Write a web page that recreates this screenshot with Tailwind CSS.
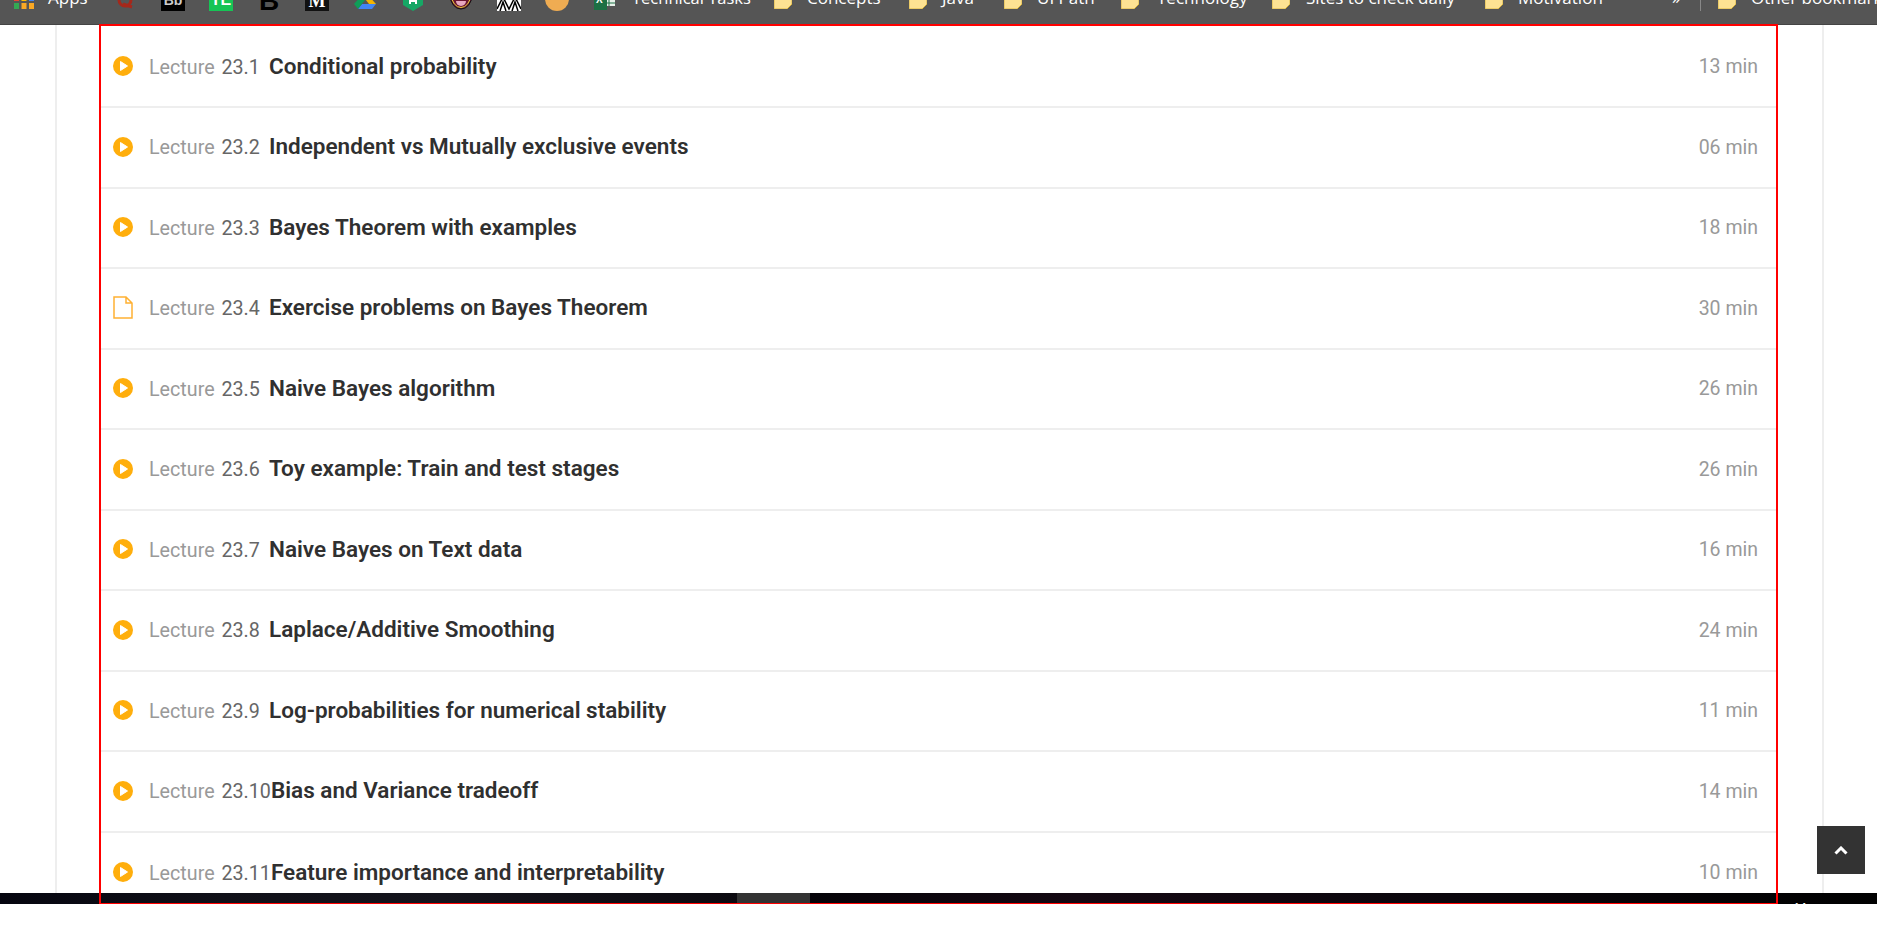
<!DOCTYPE html>
<html lang="en">
<head>
    <meta charset="UTF-8">
    <title>Lectures</title>
    <script src="https://cdn.jsdelivr.net/npm/@tailwindcss/browser@4"></script>
</head>
<body class="relative h-[929px] overflow-hidden bg-white font-['Roboto',sans-serif]">
    <!-- bookmarks bar, cut off at the top of the capture -->
    <div class="h-[25px] overflow-hidden bg-[#555555] border-b border-[#444444]">
        <div class="flex items-center h-4 -mt-[5px] text-white text-[17px] whitespace-nowrap font-['Open_Sans',sans-serif]">
            <svg class="ml-[14px] w-5 h-4 shrink-0" viewBox="0 0 20 16"><rect x="0" y="0" width="5" height="6" fill="#ea4335"/><rect x="7.5" y="0" width="5" height="6" fill="#fbbc05"/><rect x="15" y="0" width="5" height="6" fill="#4285f4"/><rect x="0" y="8" width="5" height="6" fill="#34a853"/><rect x="7.5" y="8" width="5" height="6" fill="#f9a825"/><rect x="15" y="8" width="5" height="6" fill="#f9a825"/></svg>
            <span class="ml-[14px] w-[40px] shrink-0 -mt-[10px]">Apps</span>
            <svg class="ml-[28px] w-[18px] h-4 shrink-0" viewBox="0 0 18 16"><path d="M3 5a6 6 0 1 0 12 0a6 6 0 1 0-12 0M7 9l9 3" fill="none" stroke="#a5281b" stroke-width="3"/></svg>
            <span class="ml-[27px] w-6 h-4 bg-black shrink-0 overflow-hidden text-center text-[14px] leading-[10px] font-bold text-[#cccccc] font-['Liberation_Sans',sans-serif]">Bb</span>
            <span class="ml-6 w-6 h-4 bg-[#16c455] shrink-0 overflow-hidden text-center text-[16px] leading-[10px] font-bold text-white font-['Liberation_Sans',sans-serif]">TE</span>
            <span class="ml-[26px] w-[21px] h-4 -mt-1 shrink-0 text-[28px] leading-4 font-bold text-black font-['Liberation_Sans',sans-serif]">B</span>
            <span class="ml-[25px] w-6 h-4 bg-[#111111] shrink-0 overflow-hidden text-center text-[18px] leading-[12px] font-bold text-white font-['Liberation_Serif',serif]">M</span>
            <svg class="ml-[25px] w-[22px] h-[14px] -mt-[2px] shrink-0" viewBox="0 0 22 14"><path d="M4 14h14l4-5H8z" fill="#4285f4"/><path d="M0 9l4 5 7-9-3-5z" fill="#0f9d58"/><path d="M14 0H8l7 9h7z" fill="#f4b400"/></svg>
            <svg class="ml-[27px] w-5 h-4 shrink-0" viewBox="0 0 20 16"><path d="M0 0h20v10l-10 6-10-6z" fill="#16a765"/><path d="M7 2v7M13 2v7M7 6h6" stroke="#fff" stroke-width="2"/></svg>
            <svg class="ml-[26px] w-6 h-[15px] -mt-px shrink-0" viewBox="0 0 24 15"><path d="M1 0a11 14 0 0 0 22 0z" fill="#6d1530" stroke="#111" stroke-width="1"/><path d="M2.5 0a9.5 12.5 0 0 0 19 0z" fill="#6d1530" stroke="#e6d33a" stroke-width="1"/><path d="M7 6h10a5 5 0 0 1-10 0z" fill="#e7a8c0"/></svg>
            <svg class="ml-6 w-6 h-4 shrink-0" viewBox="0 0 24 16"><rect width="24" height="16" fill="#fff"/><path d="M0 14L6 2l6 12 6-12 6 12M3 16l3-9 3 9M15 16l3-9 3 9" fill="none" stroke="#000" stroke-width="1.5"/></svg>
            <span class="ml-6 w-6 h-4 bg-[#efac52] rounded-b-full shrink-0"></span>
            <svg class="ml-[25px] w-[21px] h-4 shrink-0" viewBox="0 0 21 16"><rect x="9" y="0" width="12" height="11" fill="#e8f1ea"/><path d="M15 0v11M9 4h12M9 8h12" stroke="#1d7044" stroke-width="1"/><rect x="0" y="0" width="13" height="15" fill="#1d7044"/><text x="2" y="8" font-size="10" font-weight="700" fill="#fff" font-family="Liberation Sans">X</text></svg>
            <span class="ml-[17px] w-[114px] shrink-0 -mt-[10px] text-[16.5px]">Technical Tasks</span>
            <svg class="ml-[28px] w-[18px] h-4 -mt-1 shrink-0" viewBox="0 0 18 16"><path d="M0 0h18v11l-5 5H0z" fill="#fde293" stroke="#d9b43f" stroke-width="1"/></svg>
            <span class="ml-[15px] w-[74px] shrink-0 -mt-[10px]">Concepts</span>
            <svg class="ml-[28px] w-[18px] h-4 -mt-1 shrink-0" viewBox="0 0 18 16"><path d="M0 0h18v11l-5 5H0z" fill="#fde293" stroke="#d9b43f" stroke-width="1"/></svg>
            <span class="ml-[15px] w-[33px] shrink-0 -mt-[10px]">Java</span>
            <svg class="ml-[29px] w-[18px] h-4 -mt-1 shrink-0" viewBox="0 0 18 16"><path d="M0 0h18v11l-5 5H0z" fill="#fde293" stroke="#d9b43f" stroke-width="1"/></svg>
            <span class="ml-[15px] w-[56px] shrink-0 -mt-[10px]">UI Path</span>
            <svg class="ml-[28px] w-[18px] h-4 -mt-1 shrink-0" viewBox="0 0 18 16"><path d="M0 0h18v11l-5 5H0z" fill="#fde293" stroke="#d9b43f" stroke-width="1"/></svg>
            <span class="ml-[18px] w-[86px] shrink-0 -mt-[10px]">Technology</span>
            <svg class="ml-[29px] w-[18px] h-4 -mt-1 shrink-0" viewBox="0 0 18 16"><path d="M0 0h18v11l-5 5H0z" fill="#fde293" stroke="#d9b43f" stroke-width="1"/></svg>
            <span class="ml-4 w-[151px] shrink-0 -mt-[10px]">Sites to check daily</span>
            <svg class="ml-[28px] w-[18px] h-4 -mt-1 shrink-0" viewBox="0 0 18 16"><path d="M0 0h18v11l-5 5H0z" fill="#fde293" stroke="#d9b43f" stroke-width="1"/></svg>
            <span class="ml-[15px] w-[84px] shrink-0 -mt-[10px]">Motivation</span>
            <span class="ml-[70px] w-2 shrink-0 -mt-[10px]">»</span>
            <span class="ml-5 w-px h-4 bg-[#888888] shrink-0"></span>
            <svg class="ml-[17px] w-[18px] h-4 -mt-1 shrink-0" viewBox="0 0 18 16"><path d="M0 0h18v11l-5 5H0z" fill="#fde293" stroke="#d9b43f" stroke-width="1"/></svg>
            <span class="ml-[15px] shrink-0 -mt-[10px]">Other bookmarks</span>
        </div>
    </div>

    <!-- page column with its light side rules -->
    <div class="h-[868px] pl-[55px] pr-[53px] overflow-hidden">
        <div class="h-full border-x-2 border-[#eeeeee] pl-[44px] pr-[45px]">
            <ul class="pt-[2.5px]">
                <li class="flex items-center h-[80.5px] pb-[1px] pl-[12px] pr-[19px] border-b-2 border-[#eeeeee]">
                    <svg class="w-5 h-5 shrink-0" viewBox="0 0 20 20"><circle cx="10" cy="10" r="10" fill="#ffae0c"/><path d="M7.5 5.5v9l7-4.5z" fill="#fff" stroke="#fff" stroke-width="1" stroke-linejoin="round"/></svg>
                    <span class="ml-[16px] mt-[3px] min-w-[120px] whitespace-nowrap shrink-0 text-[19.7px] text-[#666666]"><span class="text-[#999999]">Lecture</span> <span class="ml-[2px]">23.1</span></span>
                    <span class="mt-[1px] text-[22.5px] font-semibold text-[#303030]">Conditional probability</span>
                    <span class="ml-auto mt-[1px] text-[19.5px] text-[#999999]">13 min</span>
                </li>
                <li class="flex items-center h-[80.5px] pb-[1px] pl-[12px] pr-[19px] border-b-2 border-[#eeeeee]">
                    <svg class="w-5 h-5 shrink-0" viewBox="0 0 20 20"><circle cx="10" cy="10" r="10" fill="#ffae0c"/><path d="M7.5 5.5v9l7-4.5z" fill="#fff" stroke="#fff" stroke-width="1" stroke-linejoin="round"/></svg>
                    <span class="ml-[16px] mt-[3px] min-w-[120px] whitespace-nowrap shrink-0 text-[19.7px] text-[#666666]"><span class="text-[#999999]">Lecture</span> <span class="ml-[2px]">23.2</span></span>
                    <span class="mt-[1px] text-[22.5px] font-semibold text-[#303030]">Independent vs Mutually exclusive events</span>
                    <span class="ml-auto mt-[1px] text-[19.5px] text-[#999999]">06 min</span>
                </li>
                <li class="flex items-center h-[80.5px] pb-[1px] pl-[12px] pr-[19px] border-b-2 border-[#eeeeee]">
                    <svg class="w-5 h-5 shrink-0" viewBox="0 0 20 20"><circle cx="10" cy="10" r="10" fill="#ffae0c"/><path d="M7.5 5.5v9l7-4.5z" fill="#fff" stroke="#fff" stroke-width="1" stroke-linejoin="round"/></svg>
                    <span class="ml-[16px] mt-[3px] min-w-[120px] whitespace-nowrap shrink-0 text-[19.7px] text-[#666666]"><span class="text-[#999999]">Lecture</span> <span class="ml-[2px]">23.3</span></span>
                    <span class="mt-[1px] text-[22.5px] font-semibold text-[#303030]">Bayes Theorem with examples</span>
                    <span class="ml-auto mt-[1px] text-[19.5px] text-[#999999]">18 min</span>
                </li>
                <li class="flex items-center h-[80.5px] pb-[1px] pl-[12px] pr-[19px] border-b-2 border-[#eeeeee]">
                    <svg class="w-5 h-[23px] shrink-0" viewBox="0 0 20 23"><path d="M1 1h12l6 6v15H1zM13 1v6h6" fill="none" stroke="#ffb133" stroke-width="1.5"/></svg>
                    <span class="ml-[16px] mt-[3px] min-w-[120px] whitespace-nowrap shrink-0 text-[19.7px] text-[#666666]"><span class="text-[#999999]">Lecture</span> <span class="ml-[2px]">23.4</span></span>
                    <span class="mt-[1px] text-[22.5px] font-semibold text-[#303030]">Exercise problems on Bayes Theorem</span>
                    <span class="ml-auto mt-[1px] text-[19.5px] text-[#999999]">30 min</span>
                </li>
                <li class="flex items-center h-[80.5px] pb-[1px] pl-[12px] pr-[19px] border-b-2 border-[#eeeeee]">
                    <svg class="w-5 h-5 shrink-0" viewBox="0 0 20 20"><circle cx="10" cy="10" r="10" fill="#ffae0c"/><path d="M7.5 5.5v9l7-4.5z" fill="#fff" stroke="#fff" stroke-width="1" stroke-linejoin="round"/></svg>
                    <span class="ml-[16px] mt-[3px] min-w-[120px] whitespace-nowrap shrink-0 text-[19.7px] text-[#666666]"><span class="text-[#999999]">Lecture</span> <span class="ml-[2px]">23.5</span></span>
                    <span class="mt-[1px] text-[22.5px] font-semibold text-[#303030]">Naive Bayes algorithm</span>
                    <span class="ml-auto mt-[1px] text-[19.5px] text-[#999999]">26 min</span>
                </li>
                <li class="flex items-center h-[80.5px] pb-[1px] pl-[12px] pr-[19px] border-b-2 border-[#eeeeee]">
                    <svg class="w-5 h-5 shrink-0" viewBox="0 0 20 20"><circle cx="10" cy="10" r="10" fill="#ffae0c"/><path d="M7.5 5.5v9l7-4.5z" fill="#fff" stroke="#fff" stroke-width="1" stroke-linejoin="round"/></svg>
                    <span class="ml-[16px] mt-[3px] min-w-[120px] whitespace-nowrap shrink-0 text-[19.7px] text-[#666666]"><span class="text-[#999999]">Lecture</span> <span class="ml-[2px]">23.6</span></span>
                    <span class="mt-[1px] text-[22.5px] font-semibold text-[#303030]">Toy example: Train and test stages</span>
                    <span class="ml-auto mt-[1px] text-[19.5px] text-[#999999]">26 min</span>
                </li>
                <li class="flex items-center h-[80.5px] pb-[1px] pl-[12px] pr-[19px] border-b-2 border-[#eeeeee]">
                    <svg class="w-5 h-5 shrink-0" viewBox="0 0 20 20"><circle cx="10" cy="10" r="10" fill="#ffae0c"/><path d="M7.5 5.5v9l7-4.5z" fill="#fff" stroke="#fff" stroke-width="1" stroke-linejoin="round"/></svg>
                    <span class="ml-[16px] mt-[3px] min-w-[120px] whitespace-nowrap shrink-0 text-[19.7px] text-[#666666]"><span class="text-[#999999]">Lecture</span> <span class="ml-[2px]">23.7</span></span>
                    <span class="mt-[1px] text-[22.5px] font-semibold text-[#303030]">Naive Bayes on Text data</span>
                    <span class="ml-auto mt-[1px] text-[19.5px] text-[#999999]">16 min</span>
                </li>
                <li class="flex items-center h-[80.5px] pb-[1px] pl-[12px] pr-[19px] border-b-2 border-[#eeeeee]">
                    <svg class="w-5 h-5 shrink-0" viewBox="0 0 20 20"><circle cx="10" cy="10" r="10" fill="#ffae0c"/><path d="M7.5 5.5v9l7-4.5z" fill="#fff" stroke="#fff" stroke-width="1" stroke-linejoin="round"/></svg>
                    <span class="ml-[16px] mt-[3px] min-w-[120px] whitespace-nowrap shrink-0 text-[19.7px] text-[#666666]"><span class="text-[#999999]">Lecture</span> <span class="ml-[2px]">23.8</span></span>
                    <span class="mt-[1px] text-[22.5px] font-semibold text-[#303030]">Laplace/Additive Smoothing</span>
                    <span class="ml-auto mt-[1px] text-[19.5px] text-[#999999]">24 min</span>
                </li>
                <li class="flex items-center h-[80.5px] pb-[1px] pl-[12px] pr-[19px] border-b-2 border-[#eeeeee]">
                    <svg class="w-5 h-5 shrink-0" viewBox="0 0 20 20"><circle cx="10" cy="10" r="10" fill="#ffae0c"/><path d="M7.5 5.5v9l7-4.5z" fill="#fff" stroke="#fff" stroke-width="1" stroke-linejoin="round"/></svg>
                    <span class="ml-[16px] mt-[3px] min-w-[120px] whitespace-nowrap shrink-0 text-[19.7px] text-[#666666]"><span class="text-[#999999]">Lecture</span> <span class="ml-[2px]">23.9</span></span>
                    <span class="mt-[1px] text-[22.5px] font-semibold text-[#303030]">Log-probabilities for numerical stability</span>
                    <span class="ml-auto mt-[1px] text-[19.5px] text-[#999999]">11 min</span>
                </li>
                <li class="flex items-center h-[80.5px] pb-[1px] pl-[12px] pr-[19px] border-b-2 border-[#eeeeee]">
                    <svg class="w-5 h-5 shrink-0" viewBox="0 0 20 20"><circle cx="10" cy="10" r="10" fill="#ffae0c"/><path d="M7.5 5.5v9l7-4.5z" fill="#fff" stroke="#fff" stroke-width="1" stroke-linejoin="round"/></svg>
                    <span class="ml-[16px] mt-[3px] min-w-[120px] whitespace-nowrap shrink-0 text-[19.7px] text-[#666666]"><span class="text-[#999999]">Lecture</span> <span class="ml-[2px]">23.10</span></span>
                    <span class="mt-[1px] text-[22.5px] font-semibold text-[#303030]">Bias and Variance tradeoff</span>
                    <span class="ml-auto mt-[1px] text-[19.5px] text-[#999999]">14 min</span>
                </li>
                <li class="flex items-center h-[80.5px] pb-[1px] pl-[12px] pr-[19px]">
                    <svg class="w-5 h-5 shrink-0" viewBox="0 0 20 20"><circle cx="10" cy="10" r="10" fill="#ffae0c"/><path d="M7.5 5.5v9l7-4.5z" fill="#fff" stroke="#fff" stroke-width="1" stroke-linejoin="round"/></svg>
                    <span class="ml-[16px] mt-[3px] min-w-[120px] whitespace-nowrap shrink-0 text-[19.7px] text-[#666666]"><span class="text-[#999999]">Lecture</span> <span class="ml-[2px]">23.11</span></span>
                    <span class="mt-[1px] text-[22.5px] font-semibold text-[#303030]">Feature importance and interpretability</span>
                    <span class="ml-auto mt-[1px] text-[19.5px] text-[#999999]">10 min</span>
                </li>
            </ul>
        </div>
    </div>

    <!-- dark footer image peeking in -->
    <div class="relative flex h-[11px] overflow-hidden bg-black">
        <div class="w-[737px] bg-[linear-gradient(90deg,#05050f,#101018_30%,#14141c_60%,#0c0a10)]"></div>
        <div class="w-[73px] bg-[#333333]"></div>
        <div class="flex-1 bg-[linear-gradient(90deg,#050308,#140812_25%,#0a060c_60%,#000000)]"></div>
        <span class="absolute left-[1787px] top-[8px] text-[13px] leading-4 font-bold text-white">Side</span>
    </div>

    <!-- red annotation box -->
    <div class="absolute left-[99px] top-[24px] w-[1679px] h-[880px] border-x-2 border-t-2 border-b border-[#ff0000] pointer-events-none"></div>

    <!-- back to top -->
    <a class="absolute left-[1817px] top-[826px] flex items-center justify-center w-12 h-12 bg-[#333333]">
        <svg class="w-[14px] h-[9px]" viewBox="0 0 14 9"><path d="M1.5 7.5L7 2l5.5 5.5" fill="none" stroke="#fff" stroke-width="3"/></svg>
    </a>
</body>
</html>
